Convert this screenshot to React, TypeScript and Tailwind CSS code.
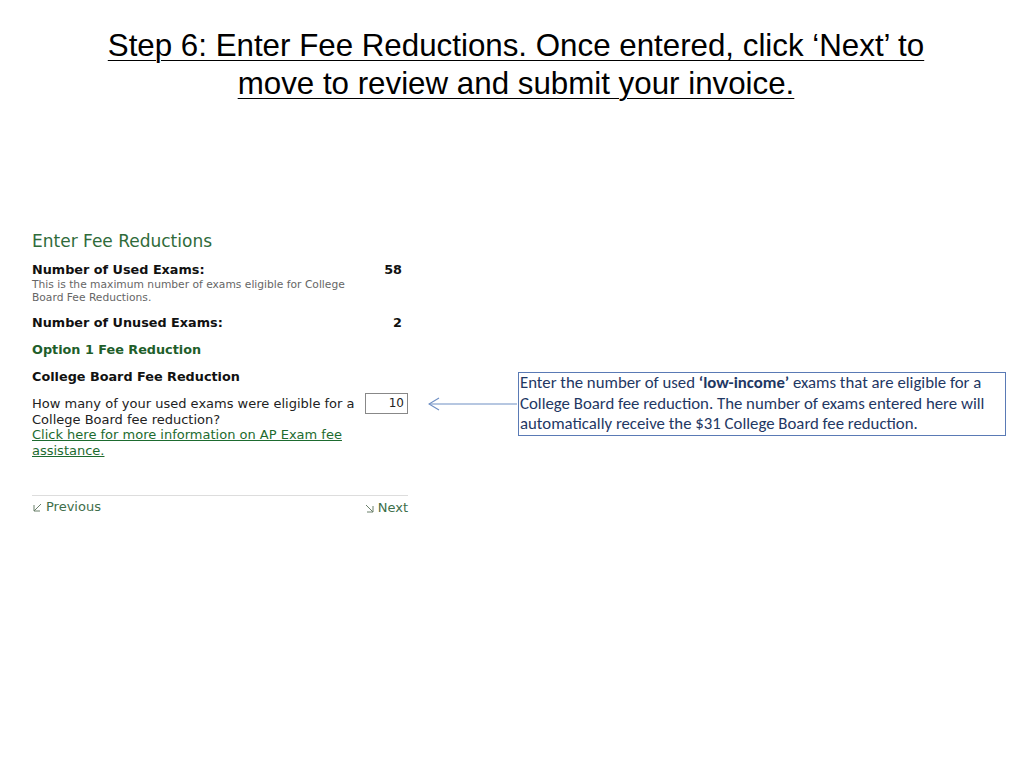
import React from 'react';

const verdana = { fontFamily: '"DejaVu Sans", Verdana, sans-serif' };

const ArrowLeft = () => (
  <svg width="90" height="14" viewBox="0 0 90 14" className="block">
    <line x1="1" y1="7" x2="89" y2="7" stroke="#6f8fc4" strokeWidth="1.2" />
    <polyline points="11,1 1,7 11,13" fill="none" stroke="#6f8fc4" strokeWidth="1.2" />
  </svg>
);

const CornerArrow = ({ dir }: { dir: 'prev' | 'next' }) => (
  <svg width="11" height="11" viewBox="0 0 11 11" className="inline-block">
    {dir === 'prev' ? (
      <>
        <line x1="9" y1="2" x2="2" y2="9" stroke="#6b806b" strokeWidth="1" />
        <polyline points="2,3 2,9 8,9" fill="none" stroke="#6b806b" strokeWidth="1" />
      </>
    ) : (
      <>
        <line x1="2" y1="2" x2="9" y2="9" stroke="#6b806b" strokeWidth="1" />
        <polyline points="3,9 9,9 9,3" fill="none" stroke="#6b806b" strokeWidth="1" />
      </>
    )}
  </svg>
);

export default function App() {
  return (
    <div className="w-[1024px] h-[768px] bg-white overflow-hidden">
      <h1
        className="pt-[27px] pl-[8px] text-center text-[31.3px] leading-[38px] text-black underline decoration-1 underline-offset-[4px]"
        style={{ fontFamily: '"Liberation Sans", Arial, sans-serif' }}
      >
        Step 6: Enter Fee Reductions. Once entered, click ‘Next’ to
        <br />
        move to review and submit your invoice.
      </h1>

      <div className="flex items-start mt-[127px] pl-[32px]">
        <div className="w-[376px]" style={verdana}>
          <div className="text-[17px] leading-[22px] text-[#2f6b3a]">Enter Fee Reductions</div>

          <div className="mt-[10px] flex justify-between text-[12.8px] font-bold text-[#111] leading-[16px]">
            <span>Number of Used Exams:</span>
            <span className="pr-[6px]">58</span>
          </div>
          <div className="text-[10.7px] leading-[13px] text-[#666] w-[330px]">
            This is the maximum number of exams eligible for College Board Fee Reductions.
          </div>

          <div className="mt-[11px] flex justify-between text-[12.8px] font-bold text-[#111] leading-[16px]">
            <span>Number of Unused Exams:</span>
            <span className="pr-[6px]">2</span>
          </div>

          <div className="mt-[11px] text-[12.8px] font-bold text-[#1e5e2a] leading-[16px]">
            Option 1 Fee Reduction
          </div>

          <div className="mt-[11px] text-[12.8px] font-bold text-[#111] leading-[16px]">
            College Board Fee Reduction
          </div>

          <div className="mt-[11px] flex justify-between items-start">
            <div className="w-[328px] text-[13px] leading-[15.5px] text-[#222]">
              How many of your used exams were eligible for a College Board fee reduction?
              <br />
              <a className="text-[#1d6b2f] underline">Click here for more information on AP Exam fee assistance.</a>
            </div>
            <div className="mt-[-3px] w-[43px] h-[21px] border border-[#888] text-right pr-[3px] text-[12px] leading-[19px] text-[#222]">
              10
            </div>
          </div>

          <div className="mt-[37px] border-t border-[#ddd]" />
          <div className="mt-[2px] flex justify-between text-[13px] leading-[16px] text-[#3e6e4a]">
            <span className="flex items-center gap-[3px]">
              <CornerArrow dir="prev" />
              Previous
            </span>
            <span className="flex items-center gap-[3px] mt-[2px]">
              <CornerArrow dir="next" />
              Next
            </span>
          </div>
        </div>

        <div className="ml-[20px] mt-[167px]">
          <ArrowLeft />
        </div>

        <div
          className="mt-[142px] w-[488px] border border-[#5a7ab5] pl-[1px] text-[16.8px] leading-[20.5px] text-[#1f3864] whitespace-nowrap"
          style={{ fontFamily: 'Carlito, Lato, "Open Sans", sans-serif' }}
        >
          Enter the number of used <b>‘low-income’</b> exams that are eligible for a
          <br />
          College Board fee reduction. The number of exams entered here will
          <br />
          automatically receive the $31 College Board fee reduction.
        </div>
      </div>
    </div>
  );
}
